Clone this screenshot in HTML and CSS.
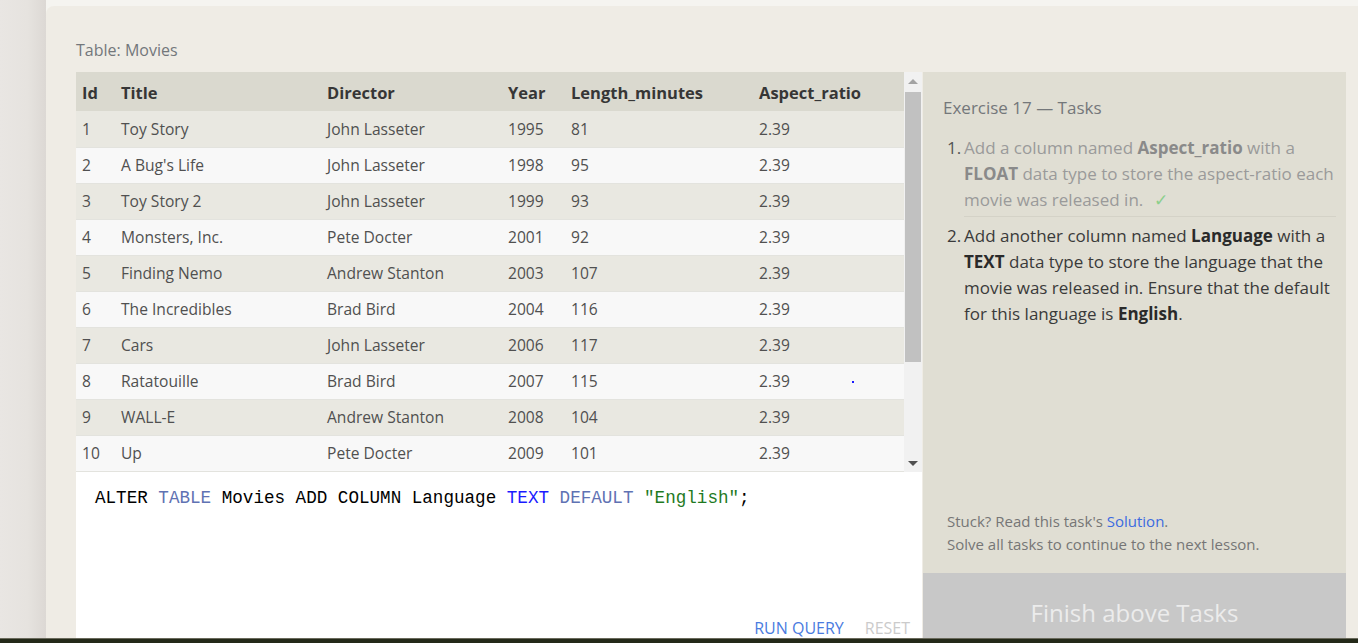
FILE: index.html
```html
<!DOCTYPE html>
<html lang="en">
<head>
<meta charset="utf-8">
<title>SQL Exercise 17</title>
<link rel="stylesheet" href="styles.css">
</head>
<body>
<div class="screen">
  <div class="gutter"></div>
  <div class="main">
    <div class="topstrip"></div>
    <div class="card">
      <div class="table-label">Table: Movies</div>
      <div class="workspace">
        <div class="left">
          <div class="table-box">
            <div class="table-scroll">
              <table class="movies">
                <colgroup>
                  <col class="c-id"><col class="c-title"><col class="c-dir"><col class="c-year"><col class="c-len"><col class="c-ar">
                </colgroup>
                <thead>
                  <tr><th>Id</th><th>Title</th><th>Director</th><th>Year</th><th>Length_minutes</th><th>Aspect_ratio</th></tr>
                </thead>
                <tbody>
                  <tr><td>1</td><td>Toy Story</td><td>John Lasseter</td><td>1995</td><td>81</td><td>2.39</td></tr>
                  <tr><td>2</td><td>A Bug's Life</td><td>John Lasseter</td><td>1998</td><td>95</td><td>2.39</td></tr>
                  <tr><td>3</td><td>Toy Story 2</td><td>John Lasseter</td><td>1999</td><td>93</td><td>2.39</td></tr>
                  <tr><td>4</td><td>Monsters, Inc.</td><td>Pete Docter</td><td>2001</td><td>92</td><td>2.39</td></tr>
                  <tr><td>5</td><td>Finding Nemo</td><td>Andrew Stanton</td><td>2003</td><td>107</td><td>2.39</td></tr>
                  <tr><td>6</td><td>The Incredibles</td><td>Brad Bird</td><td>2004</td><td>116</td><td>2.39</td></tr>
                  <tr><td>7</td><td>Cars</td><td>John Lasseter</td><td>2006</td><td>117</td><td>2.39</td></tr>
                  <tr><td>8</td><td>Ratatouille</td><td>Brad Bird</td><td>2007</td><td>115</td><td>2.39<span class="dot"></span></td></tr>
                  <tr><td>9</td><td>WALL-E</td><td>Andrew Stanton</td><td>2008</td><td>104</td><td>2.39</td></tr>
                  <tr><td>10</td><td>Up</td><td>Pete Docter</td><td>2009</td><td>101</td><td>2.39</td></tr>
                </tbody>
              </table>
            </div>
            <div class="scrollbar">
              <div class="arrow arrow-up"></div>
              <div class="track"><div class="thumb"></div></div>
              <div class="arrow arrow-down"></div>
            </div>
          </div>
          <div class="editor">
            <div class="code"><span class="k">ALTER</span> <span class="kw2">TABLE</span> Movies ADD COLUMN Language <span class="kw1">TEXT</span> <span class="kw2">DEFAULT</span> <span class="str">"English"</span>;</div>
            <div class="actions">
              <span class="run">RUN QUERY</span>
              <span class="reset">RESET</span>
            </div>
          </div>
        </div>
        <div class="panel">
          <div class="panel-body">
            <div class="panel-title">Exercise 17 — Tasks</div>
            <ol class="tasks">
              <li class="task done"><span class="num">1.</span><span class="txt">Add a column named <b>Aspect_ratio</b> with a <b>FLOAT</b> data type to store the aspect-ratio each movie was released in. <span class="check">✓</span></span></li>
              <li class="task"><span class="num">2.</span><span class="txt">Add another column named <b>Language</b> with a <b>TEXT</b> data type to store the language that the movie was released in. Ensure that the default for this language is <b>English</b>.</span></li>
            </ol>
            <div class="help">
              <div>Stuck? Read this task's <span class="link">Solution</span>.</div>
              <div>Solve all tasks to continue to the next lesson.</div>
            </div>
          </div>
          <div class="finish">Finish above Tasks</div>
        </div>
      </div>
    </div>
  </div>
</div>
<div class="taskbar"></div>
</body>
</html>
```

FILE: styles.css
```css
* { box-sizing: border-box; }
html, body { margin: 0; padding: 0; }
body {
  width: 1358px;
  height: 643px;
  overflow: hidden;
  font-family: "Open Sans", "Noto Sans", sans-serif;
  background: #efece5;
  display: flex;
  flex-direction: column;
}
.screen {
  height: 638px;
  display: flex;
  overflow: hidden;
}
.gutter {
  width: 46px;
  flex: none;
  background: linear-gradient(to right, #e9e6e3 0%, #e6e3df 60%, #dcd8d4 100%);
}
.main {
  flex: 1;
  display: flex;
  flex-direction: column;
  background: #f5f4f0;
  min-width: 0;
}
.topstrip { height: 6px; flex: none; }
.card {
  flex: 1;
  background: #efece5;
  border-top-left-radius: 8px;
  padding: 34px 12px 0 30px;
  display: flex;
  flex-direction: column;
  min-height: 0;
}
.table-label {
  font-size: 16px;
  line-height: 20px;
  color: #73777b;
  margin-bottom: 12px;
}
.workspace {
  display: flex;
  flex: 1;
  min-height: 0;
}
.left {
  width: 846px;
  flex: none;
  display: flex;
  flex-direction: column;
}
.table-box {
  height: 400px;
  display: flex;
  flex: none;
}
.table-scroll {
  width: 828px;
  height: 400px;
  overflow: hidden;
  background: #efece5;
}
.movies {
  width: 828px;
  border-collapse: collapse;
  table-layout: fixed;
  font-size: 15.6px;
}
.c-id { width: 39px; }
.c-title { width: 206px; }
.c-dir { width: 181px; }
.c-year { width: 63px; }
.c-len { width: 188px; }
.c-ar { width: 151px; }
.movies th {
  background: #dad9cf;
  height: 39px;
  text-align: left;
  font-weight: 700;
  color: #363636;
  padding: 2px 0 0 6px;
  font-size: 16.5px;
}
.movies td {
  height: 36px;
  padding: 0 0 0 6px;
  color: #505050;
  border-bottom: 1px solid #e3e3de;
  white-space: nowrap;
  position: relative;
}
.movies tbody tr:nth-child(odd) td { background: #e9e8e1; }
.movies tbody tr:nth-child(even) td { background: #f8f8f8; }
.dot {
  position: absolute;
  left: 99px;
  top: 17px;
  width: 2px;
  height: 2px;
  background: #1a1aff;
}
.scrollbar {
  width: 18px;
  flex: none;
  background: #f1f1f1;
  display: flex;
  flex-direction: column;
}
.arrow {
  height: 18px;
  flex: none;
  display: flex;
  align-items: center;
  justify-content: center;
}
.arrow::before {
  content: "";
  width: 0;
  height: 0;
  border-left: 5px solid transparent;
  border-right: 5px solid transparent;
}
.arrow-up::before { border-bottom: 5px solid #a3a3a3; }
.arrow-down::before { border-top: 5px solid #505050; }
.track {
  flex: 1;
  padding: 2px 1px 0 1px;
}
.thumb {
  height: 270px;
  background: #c1c1c1;
}
.editor {
  flex: 1;
  background: #ffffff;
  display: flex;
  flex-direction: column;
  padding: 13px 12px 0 19px;
  min-height: 0;
}
.code {
  font-family: "Liberation Mono", "DejaVu Sans Mono", monospace;
  font-size: 17.6px;
  line-height: 26px;
  color: #000;
  white-space: pre;
}
.kw2 { color: #5f72b3; }
.kw1 { color: #1a1aff; }
.str { color: #1f7a1f; }
.actions {
  margin-top: auto;
  display: flex;
  justify-content: flex-end;
  gap: 21px;
  font-size: 16px;
  line-height: 20px;
  height: 20px;
}
.run { color: #4a7be0; }
.reset { color: #cbcbcb; }
.panel {
  width: 423px;
  flex: none;
  margin-left: 1px;
  background: #e0ded3;
  display: flex;
  flex-direction: column;
  min-height: 0;
}
.panel-body {
  flex: 1;
  padding: 25px 4px 17px 20px;
  display: flex;
  flex-direction: column;
}
.panel-title {
  font-size: 17px;
  line-height: 22px;
  color: #74777a;
}
.tasks {
  list-style: none;
  margin: 16px 0 0 0;
  padding: 0;
}
.task {
  display: flex;
  font-size: 17px;
  line-height: 26px;
  color: #3a3a3a;
  padding: 6px 6px 0 4px;
}
.task.done {
  padding-top: 0;
  color: #9a9a9a;
}
.task.done .txt {
  padding-bottom: 3px;
  border-bottom: 1px solid #d4d2c7;
}
.task.done .num { color: #555; }
.num {
  width: 17px;
  flex: none;
}
.txt { flex: 1; }
.txt b { font-weight: 700; color: #2a2a2a; }
.task.done .txt b { color: #8a8a8a; }
.check {
  color: #8ccf8c;
  margin-left: 6px;
}
.help {
  margin-top: auto;
  font-size: 15px;
  line-height: 23px;
  color: #767676;
  padding-left: 4px;
}
.link { color: #3c6be0; }
.finish {
  flex: none;
  height: 65px;
  background: #c8c8c8;
  color: #ececec;
  font-size: 24px;
  line-height: 32px;
  padding-top: 24px;
  text-align: center;
}
.taskbar {
  height: 5px;
  flex: none;
  background: #232918;
  border-top: 1px solid #6a6a5c;
}
```
